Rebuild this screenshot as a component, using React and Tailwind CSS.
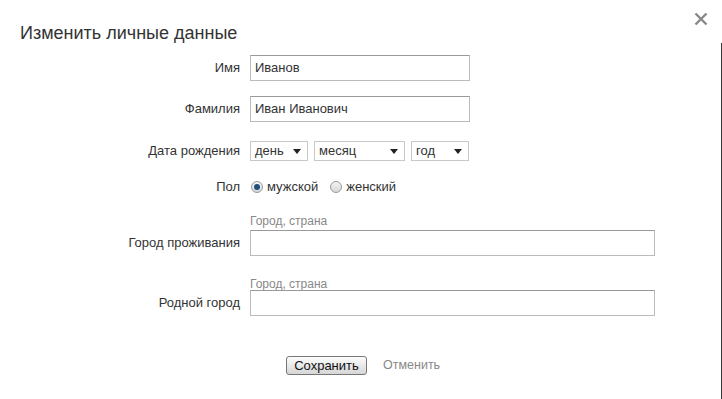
import React from 'react';

const font = { fontFamily: '"Liberation Sans", Arial, sans-serif' };

const Caret = () => (
  <svg width="8" height="5" viewBox="0 0 8 5" className="ml-auto">
    <path d="M0 0 L8 0 L4 5 Z" fill="#222" />
  </svg>
);

const Select = ({ label, w }) => (
  <div className={`flex items-center h-[20px] border border-[#c8c8c8] bg-white pl-[4px] pr-[6px] text-[13px] text-[#333] ${w}`}>
    <span>{label}</span>
    <Caret />
  </div>
);

const Radio = ({ checked }) => (
  <span className="flex h-[12px] w-[12px] items-center justify-center rounded-full border border-[#9a9a9a] bg-gradient-to-b from-[#f4f4f4] to-[#d8d8d8]">
    {checked && <span className="h-[6px] w-[6px] rounded-full bg-[#1f4f7a]" />}
  </span>
);

const Field = ({ value, w }) => (
  <div className={`flex items-center h-[26px] border border-[#bbb] border-t-[#999] bg-white px-[4px] text-[13px] text-[#333] ${w}`}>
    {value}
  </div>
);

const App = () => {
  return (
    <div className="relative w-[722px] h-[399px] bg-white overflow-hidden" style={font}>
      <div className="absolute right-0 top-[43px] bottom-0 w-px bg-[#3a3a3a]" />
      <button className="absolute left-[694px] top-[12px] text-[#888]">
        <svg width="14" height="14" viewBox="0 0 14 14">
          <path d="M1.5 1.5 L12.5 12.5 M12.5 1.5 L1.5 12.5" stroke="#888" strokeWidth="2.4" />
        </svg>
      </button>

      <h1 className="pl-[20px] pt-[22px] h-[44px] text-[18px] leading-[22px] text-[#333]">
        Изменить личные данные
      </h1>

      <div className="flex flex-col text-[13px] text-[#333]">
        <div className="mt-[11px] flex items-center">
          <span className="w-[240px] text-right">Имя</span>
          <div className="ml-[10px]"><Field value="Иванов" w="w-[220px]" /></div>
        </div>

        <div className="mt-[15px] flex items-center">
          <span className="w-[240px] text-right">Фамилия</span>
          <div className="ml-[10px]"><Field value="Иван Иванович" w="w-[220px]" /></div>
        </div>

        <div className="mt-[19px] flex items-center">
          <span className="w-[240px] text-right">Дата рождения</span>
          <div className="ml-[10px] flex gap-[6px]">
            <Select label="день" w="w-[58px]" />
            <Select label="месяц" w="w-[91px]" />
            <Select label="год" w="w-[58px]" />
          </div>
        </div>

        <div className="mt-[16px] flex items-center h-[20px]">
          <span className="w-[240px] text-right">Пол</span>
          <div className="ml-[10px] flex items-center">
            <span className="ml-[1px]"><Radio checked /></span>
            <span className="ml-[4px]">мужской</span>
            <span className="ml-[12px]"><Radio /></span>
            <span className="ml-[4px]">женский</span>
          </div>
        </div>

        <div className="mt-[17px] pl-[250px] text-[12px] leading-[14px] text-[#888]">Город, страна</div>
        <div className="mt-[2px] flex items-center">
          <span className="w-[240px] text-right">Город проживания</span>
          <div className="ml-[10px]"><Field value="" w="w-[405px]" /></div>
        </div>

        <div className="mt-[21px] pl-[250px] text-[12px] leading-[14px] text-[#888]">Город, страна</div>
        <div className="mt-[-1px] flex items-center">
          <span className="w-[240px] text-right">Родной город</span>
          <div className="ml-[10px]"><Field value="" w="w-[405px]" /></div>
        </div>

        <div className="mt-[40px] flex items-center pl-[286px]">
          <button className="h-[19px] w-[81px] rounded-[3px] border border-[#777] bg-gradient-to-b from-[#fdfdfd] to-[#d6d6d6] text-[13px] leading-[17px] text-[#111]">
            Сохранить
          </button>
          <span className="ml-[16px] text-[12.5px] text-[#888]">Отменить</span>
        </div>
      </div>
    </div>
  );
};

export default App;
